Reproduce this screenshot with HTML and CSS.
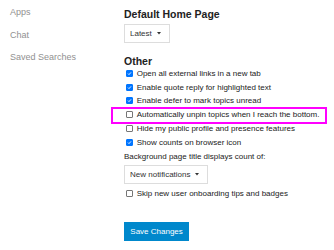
FILE: index.html
```html
<!DOCTYPE html>
<html lang="en">
  <head>
    <meta charset="UTF-8" />
    <meta name="viewport" content="width=device-width, initial-scale=1.0" />
    <title>Preferences - Interface</title>
    <link rel="stylesheet" href="styles.css">
  </head>
  <body>
    <div class="page">
      <ul class="side-nav">
        <li>Apps</li>
        <li>Chat</li>
        <li>Saved Searches</li>
      </ul>

      <div class="prefs">
        <h3 class="section-title">Default Home Page</h3>
        <div class="combo">
          <span>Latest</span>
          <svg class="caret" viewBox="0 0 4 3"><path d="M0 0h4L2 2.6z" fill="#333"/></svg>
        </div>

        <h3 class="section-title other">Other</h3>
        <div class="controls">
          <label class="row"><input type="checkbox" checked /> Open all external links in a new tab</label>
          <label class="row"><input type="checkbox" checked /> Enable quote reply for highlighted text</label>
          <label class="row"><input type="checkbox" checked /> Enable defer to mark topics unread</label>
          <label class="row highlight"><input type="checkbox" /> Automatically unpin topics when I reach the bottom.<span class="marker"></span></label>
          <label class="row"><input type="checkbox" /> Hide my public profile and presence features</label>
          <label class="row"><input type="checkbox" checked /> Show counts on browser icon</label>
          <div class="row">Background page title displays count of:</div>
          <div class="combo wide">
            <span>New notifications</span>
            <svg class="caret" viewBox="0 0 4 3"><path d="M0 0h4L2 2.6z" fill="#333"/></svg>
          </div>
          <label class="row"><input type="checkbox" /> Skip new user onboarding tips and badges</label>
        </div>

        <button type="button" class="save-btn">Save Changes</button>
      </div>
    </div>
  </body>
</html>
```

FILE: styles.css
```css
* {
  margin: 0;
  padding: 0;
  box-sizing: border-box;
}

body {
  font-family: "Liberation Sans", Arial, sans-serif;
  background: white;
  color: #222;
  font-size: 8px;
}

.page {
  display: flex;
}

.side-nav {
  list-style: none;
  width: 124px;
  padding: 1px 0 0 10px;
  font-size: 9px;
  color: #919191;
}

.side-nav li {
  line-height: 22.5px;
}

.prefs {
  flex: 1;
  padding-top: 8px;
}

.section-title {
  font-size: 10.5px;
  line-height: 13px;
  font-weight: bold;
  color: #222;
}

.section-title.other {
  margin-top: 11.5px;
  line-height: 12px;
}

.combo {
  display: inline-flex;
  align-items: center;
  gap: 5px;
  height: 19px;
  margin-top: 3px;
  padding: 0 8px 0 5px;
  border: 1px solid #ddd;
  background: white;
  color: #333;
}

.caret {
  width: 4px;
  height: 3px;
}

.controls {
  display: flex;
  flex-direction: column;
  align-items: flex-start;
}

.controls .combo {
  margin: 1.9px 0 2.8px;
}

.row {
  position: relative;
  display: flex;
  align-items: center;
  gap: 3.7px;
  height: 13.8px;
  color: #222;
}

.row input[type="checkbox"] {
  appearance: none;
  flex: none;
  width: 7px;
  height: 7px;
  margin: 0 0 0 2px;
  border: 1px solid #767676;
  border-radius: 1px;
  background: white;
}

.row input[type="checkbox"]:checked {
  border-color: #0075ff;
  background: #0075ff url("data:image/svg+xml,%3Csvg xmlns='http://www.w3.org/2000/svg' viewBox='0 0 10 10'%3E%3Cpath d='M2 5.2l2 2 4-4.4' fill='none' stroke='white' stroke-width='1.8'/%3E%3C/svg%3E") center / 100% no-repeat;
}

.marker {
  position: absolute;
  left: -13px;
  top: -0.5px;
  width: 216px;
  height: 16.5px;
  border: 2px solid #ff00ff;
}

.save-btn {
  display: block;
  margin-top: 21.4px;
  height: 19px;
  padding: 0 6.3px;
  border: none;
  background: #0088cc;
  color: white;
  font-family: inherit;
  font-size: 8px;
  cursor: pointer;
}
```
